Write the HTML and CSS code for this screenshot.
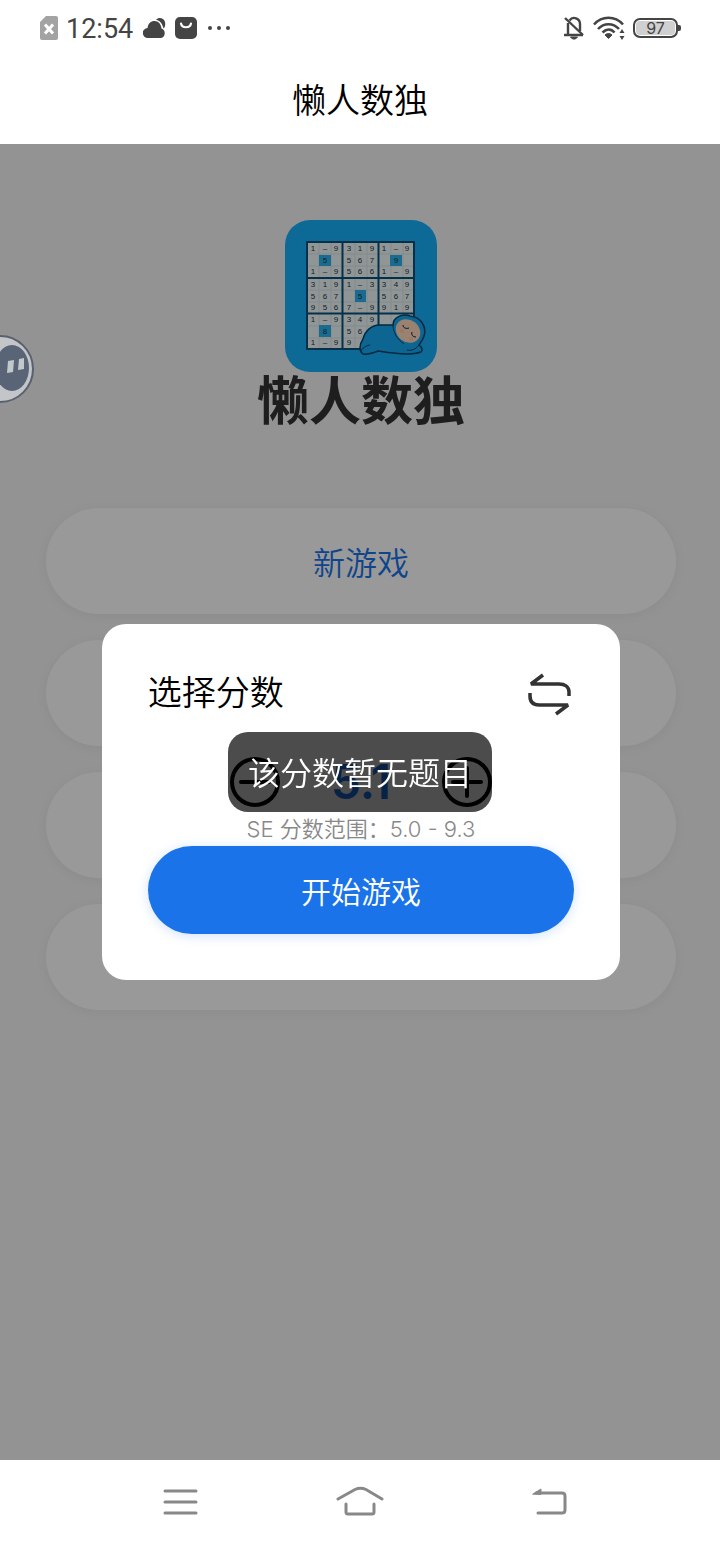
FILE: index.html
```html
<!DOCTYPE html>
<html lang="zh-CN">
<head>
<meta charset="UTF-8" />
<meta name="viewport" content="width=device-width, initial-scale=1" />
<title>懒人数独</title>
<link rel="stylesheet" href="styles.css">
</head>
<body>
  <div class="status-bar">
    <div class="status-group">
      <svg width="18" height="24" viewBox="0 0 18 24" aria-hidden="true">
        <path d="M6 0h10a2 2 0 0 1 2 2v20a2 2 0 0 1-2 2H2a2 2 0 0 1-2-2V6z" fill="#a3a3a3"/>
        <path d="M5 8.500l8 9M13 8.500l-8 9" stroke="#fff" stroke-width="3"/>
      </svg>
      <span class="clock">12:54</span>
      <svg width="24" height="22" viewBox="0 0 24 22" aria-hidden="true">
        <path d="M13 2.500C16-.5 21 1 22 5c.6 3 0 5-1.500 6.500C19.500 7 17.500 4 13 2.500z" fill="#444"/>
        <path d="M5 21a5 5 0 0 1-.5-10C5 6.500 8 4 11.500 4c4 0 6.500 3 7 7.500A5 5 0 0 1 18 21z" fill="#444"/>
      </svg>
      <svg width="22" height="22" viewBox="0 0 22 22" aria-hidden="true">
        <rect width="22" height="22" rx="5" fill="#444"/>
        <path d="M6 6.500c1 5 9 5 10 0" fill="none" stroke="#fff" stroke-width="2.200" stroke-linecap="round"/>
      </svg>
      <svg width="28" height="4" viewBox="0 0 28 4" aria-hidden="true">
        <circle cx="5" cy="2" r="2" fill="#444"/><circle cx="14" cy="2" r="2" fill="#444"/><circle cx="23" cy="2" r="2" fill="#444"/>
      </svg>
    </div>
    <div class="status-group">
      <svg width="22" height="24" viewBox="0 0 22 24" fill="none" stroke="#444" stroke-width="2.400" aria-hidden="true">
        <path d="M5 7v12M6.500 4.500C10-.5 17 2.500 17 8v7M1 19h19"/>
        <path d="M7.500 21h7l-2 2h-3z" fill="#444" stroke-width="1"/>
        <path d="M2 2l18 17"/>
      </svg>
      <svg width="32" height="24" viewBox="0 0 32 24" fill="none" stroke="#444" stroke-width="2.500" aria-hidden="true">
        <path d="M1 8.500C9-.5 22-.5 30 8.500M5 13c6-6.500 15-6.500 21 0M9.500 16.500c4-4 8.500-4 12 0"/>
        <path d="M12 19c2-2 5-2 7 0l-3.500 3.500z" fill="#444" stroke-width="1"/>
        <path d="M29 13l2.500 4h-5zM29 24l2.500-4h-5z" fill="#444" stroke="none"/>
      </svg>
      <div class="battery">97</div>
    </div>
  </div>

  <header class="page-header">懒人数独</header>

  <main class="page">
    <svg class="logo" viewBox="0 0 152 152" aria-hidden="true">
      <rect width="152" height="152" rx="25" fill="#16b0fa"/>
      <rect x="22" y="22" width="107" height="107" fill="#f0fafa"/>
      <path d="M34 22v107M46 22v107M70 22v107M82 22v107M106 22v107M118 22v107M22 34h107M22 46h107M22 70h107M22 82h107M22 106h107M22 118h107" stroke="#dbe8ea" stroke-width="1"/>
      <path d="M34 35h12v11H34zM105 35h12v11h-12zM70 70h11v12H70zM34 105h12v12H34z" fill="#2ab4f0"/>
      <path d="M22 22h107v107H22zM57.500 22v107M93.500 22v107M22 58h107M22 93.500h107" fill="none" stroke="#08507c" stroke-width="2"/>
      <g class="digits">
        <text x="28 40 51 64 75 87 99 111 122" y="31">1–93191–9</text>
        <text x="40 64 75 87 111" y="43">55679</text>
        <text x="28 40 51 64 75 87 99 111 122" y="54">1–95661–9</text>
        <text x="28 40 51 64 75 87 99 111 122" y="67">3191–3349</text>
        <text x="28 40 51 75 99 111 122" y="79">5675567</text>
        <text x="28 40 51 64 75 87 99 111 122" y="90">9567–9919</text>
        <text x="28 40 51 64 75 87" y="102">1–9349</text>
        <text x="40 64 75" y="114">856</text>
        <text x="28 40 51 64" y="125">1–99</text>
      </g>
      <path d="M78 134c-4-3-4-9 0-15 2-8 9-15 18-14l12 0c0-8 10-12 17-9 11 1 17 11 14 20-1 4-4 7-5 9 3 2 4 5 2 7-12 4-29 1-43-1-5 2-10 4-15 3z" fill="#16aaf4" stroke="#07456f" stroke-width="1.500" stroke-linejoin="round"/>
      <path d="M76 132c1-4 4-6 9-7M122 130c4 1 8 0 12-5M108 105c0 7 4 14 11 19" fill="none" stroke="#07456f" stroke-width="1"/>
      <ellipse cx="123" cy="111" rx="13" ry="11" transform="rotate(38 123 111)" fill="#ffd9bd"/>
      <path d="M118 105c0 3 3 4 6 3M127 112c-1 3 1 5 4 5" fill="none" stroke="#16212b" stroke-width="1"/>
      <circle cx="117" cy="111" r="2" fill="#ffc8ac"/><circle cx="126" cy="119" r="2" fill="#ffc8ac"/>
    </svg>
    <h1 class="app-name">懒人数独</h1>

    <nav class="menu">
      <button class="menu-item" type="button">新游戏</button>
      <button class="menu-item" type="button" aria-label="继续游戏"></button>
      <button class="menu-item" type="button" aria-label="选择分数"></button>
      <button class="menu-item" type="button" aria-label="设置"></button>
    </nav>

    <div class="mask">
      <section class="dialog" role="dialog" aria-labelledby="dialog-title">
        <div class="dialog-head">
          <h2 id="dialog-title">选择分数</h2>
          <button class="icon-btn" type="button" aria-label="切换">
            <svg width="48" height="46" viewBox="0 0 48 46" fill="none" stroke="#333" stroke-width="3.500" stroke-linejoin="bevel" aria-hidden="true">
              <path d="M17 5L5 14h28c6 0 10 3 10 8v4"/>
              <path d="M4 23v3c0 6 3 9 9 9h29l-12 9"/>
            </svg>
          </button>
        </div>
        <div class="stepper">
          <button class="icon-btn" type="button" aria-label="减少">
            <svg width="50" height="50" viewBox="0 0 50 50" fill="none" stroke="#000" stroke-width="4" aria-hidden="true">
              <circle cx="25" cy="25" r="23"/><path d="M11 25h28" stroke-linecap="round"/>
            </svg>
          </button>
          <output class="score">5.1</output>
          <button class="icon-btn" type="button" aria-label="增加">
            <svg width="50" height="50" viewBox="0 0 50 50" fill="none" stroke="#000" stroke-width="4" aria-hidden="true">
              <circle cx="25" cy="25" r="23"/><path d="M11 25h28M25 11v28" stroke-linecap="round"/>
            </svg>
          </button>
        </div>
        <p class="range">SE 分数范围：5.0 - 9.3</p>
        <button class="start-btn" type="button">开始游戏</button>
      </section>
    </div>

    <svg class="float-ball" width="34" height="68" viewBox="0 0 34 68" aria-hidden="true">
      <circle cx="0" cy="34" r="33" fill="#c3c5c9" stroke="#596171" stroke-width="2"/>
      <ellipse cx="12" cy="33" rx="17" ry="23" fill="#596476"/>
      <path d="M8 26l6-1-1 12-6 1zM19 24l5-1v11l-6 1z" fill="#c3c9cb"/>
    </svg>
  </main>

  <footer class="nav-bar">
    <button class="icon-btn" type="button" aria-label="菜单">
      <svg width="60" height="32" viewBox="0 0 60 32" fill="none" stroke="#888" stroke-width="3" stroke-linecap="round" aria-hidden="true">
        <path d="M25 5h31M25 16h31M25 27h31"/>
      </svg>
    </button>
    <button class="icon-btn" type="button" aria-label="主页">
      <svg width="60" height="32" viewBox="0 0 60 32" fill="none" stroke="#888" stroke-width="3" stroke-linecap="round" aria-hidden="true">
        <path d="M8 13L25 3.500q5.500-2.500 11 0L52 13"/>
        <path d="M16 18v8q0 2 2 2h24q2 0 2-2v-8"/>
      </svg>
    </button>
    <button class="icon-btn" type="button" aria-label="返回">
      <svg width="60" height="32" viewBox="0 0 60 32" fill="none" stroke="#888" stroke-width="3" stroke-linecap="round" aria-hidden="true">
        <path d="M16 7h26q3 0 3 3v14q0 3-3 3H18"/>
        <path d="M13 8l8-5v5z" fill="#888" stroke-width="1"/>
      </svg>
    </button>
  </footer>

  <div class="toast" role="status">该分数暂无题目</div>
</body>
</html>
```
FILE: styles.css
```css
:root {
  --blue: #1a73e8;
  --font-family: Inter, 'Noto Sans CJK SC', sans-serif;
}
* {
  box-sizing: border-box;
}
body {
  margin: 0;
  min-height: 100vh;
  display: flex;
  flex-direction: column;
  background: #fff;
  font-family: var(--font-family);
  font-weight: 350;
}
button {
  font: inherit;
  border: 0;
  padding: 0;
  cursor: pointer;
}
svg {
  display: block;
}
.icon-btn {
  background: none;
}

/* phone status bar */
.status-bar {
  height: 56px;
  padding: 0 42px 0 40px;
  display: flex;
  align-items: center;
  justify-content: space-between;
}
.status-group {
  display: flex;
  align-items: center;
  gap: 8px;
}
.clock {
  font-family: Roboto, sans-serif;
  font-size: 27px;
  font-weight: 400;
  line-height: 30px;
  padding: 2px 2px 0 0;
  color: #444;
}
.battery {
  position: relative;
  width: 45px;
  height: 20px;
  border: 2px solid #444;
  border-radius: 7px;
  background: #d0d0d0;
  box-shadow: inset 0 0 0 1px #fff;
  font-size: 16px;
  font-weight: 400;
  line-height: 16px;
  text-align: center;
  color: #444;
}
.battery::after {
  content: '';
  position: absolute;
  right: -5px;
  top: 5px;
  width: 3px;
  height: 6px;
  border-radius: 0 2px 2px 0;
  background: #444;
}

.page-header {
  height: 88px;
  line-height: 90px;
  font-size: 34px;
  text-align: center;
  color: #000;
}

/* home page */
.page {
  position: relative;
  flex: 1;
  display: flex;
  flex-direction: column;
  align-items: center;
  padding: 76px 44px 76px 46px;
  background: #f5f5f5;
}
.logo {
  width: 152px;
  height: 152px;
}
.digits {
  font-family: 'Liberation Sans', sans-serif;
  font-size: 8px;
  text-anchor: middle;
  fill: #24333f;
}
.app-name {
  margin: 0 0 76px;
  font-size: 52px;
  font-weight: 700;
  line-height: 60px;
  color: #333;
}
.menu {
  width: 100%;
  display: flex;
  flex-direction: column;
  gap: 26px;
}
.menu-item {
  height: 106px;
  border-radius: 53px;
  background: #fff;
  box-shadow: 0 2px 12px rgba(0, 0, 0, 0.05);
  font-size: 32px;
  color: var(--blue);
}

/* score dialog */
.mask {
  position: absolute;
  inset: 0;
  display: flex;
  align-items: center;
  justify-content: center;
  background: rgba(0, 0, 0, 0.4);
}
.dialog {
  width: 72%;
  margin-left: 2px;
  padding: 46px;
  border-radius: 24px;
  background: #fff;
}
.dialog-head {
  display: flex;
  align-items: center;
  justify-content: space-between;
}
.dialog-head h2 {
  margin: 0;
  font-size: 34px;
  font-weight: 350;
  line-height: 46px;
}
.stepper {
  height: 60px;
  margin: 36px auto 0;
  width: 262px;
  display: flex;
  align-items: center;
  justify-content: space-between;
}
.score {
  font-size: 48px;
  font-weight: 600;
  line-height: 60px;
  color: var(--blue);
}
.range {
  margin: 0;
  font-size: 22px;
  line-height: 34px;
  text-align: center;
  color: #888;
}
.start-btn {
  width: 100%;
  height: 88px;
  border-radius: 44px;
  background: var(--blue);
  box-shadow: 0 2px 12px rgba(26, 115, 232, 0.2);
  font-size: 30px;
  color: #fff;
}

.float-ball {
  position: absolute;
  left: 0;
  top: 191px;
}
.toast {
  position: fixed;
  left: 50%;
  top: 50%;
  transform: translate(-50%, -50%);
  padding: 22px 20px 18px;
  border-radius: 20px;
  background: rgba(0, 0, 0, 0.7);
  font-size: 32px;
  line-height: 40px;
  white-space: nowrap;
  color: #fff;
}

/* system navigation */
.nav-bar {
  height: 84px;
  padding: 0 140px;
  display: flex;
  align-items: center;
  justify-content: space-between;
}
```
